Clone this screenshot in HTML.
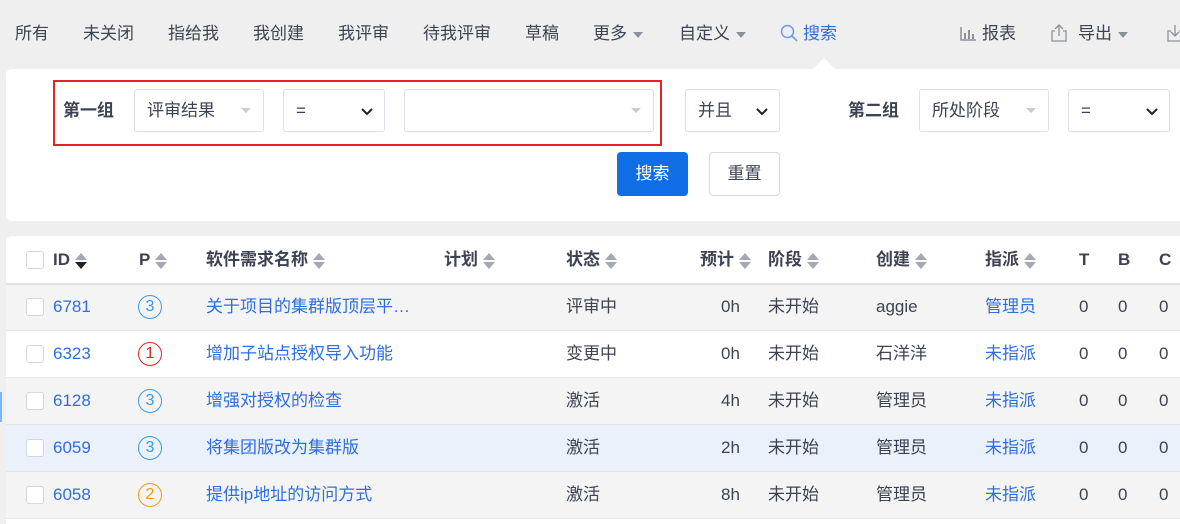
<!DOCTYPE html>
<html><head><meta charset="utf-8"><style>
*{margin:0;padding:0;box-sizing:border-box}
html,body{width:1180px;height:524px;overflow:hidden}
body{background:#efefef;font-family:"Liberation Sans","Noto Sans CJK SC",sans-serif;font-size:17px;color:#3c4353;position:relative}
.a{position:absolute;white-space:nowrap;line-height:24px;height:24px}
.nav{top:22px;color:#3c4353}
.caret{display:inline-block;width:0;height:0;border-left:5px solid transparent;border-right:5px solid transparent;border-top:6px solid #8c919c;vertical-align:middle;margin-left:6px}
.panel{left:6px;top:69px;width:1174px;height:152px;background:#fff;border-radius:6px 0 0 6px}
.box{position:absolute;background:#fff;border:1px solid #dcdfe4;border-radius:3px;height:43px;line-height:41px;padding-left:12px}
.gc{position:absolute;right:12px;top:18px;border-left:5px solid transparent;border-right:5px solid transparent;border-top:5px solid #c7cbd2}
.chev{position:absolute;right:10px;top:14px}
.lbl{font-weight:bold;color:#3c4353}
.tbl{left:6px;top:236px;width:1174px;height:288px;background:#fff;border-radius:6px 0 0 0}
.row{position:absolute;left:6px;width:1174px;height:47px;border-top:1px solid #e6e6e6}
.h{font-weight:bold;top:248px}
.s{display:inline-block;vertical-align:middle;margin-left:5px;width:12px;height:18px;position:relative}
.s:before{content:"";position:absolute;left:0;top:1px;border-left:6px solid transparent;border-right:6px solid transparent;border-bottom:7px solid #a3a8b2}
.s:after{content:"";position:absolute;left:0;top:10px;border-left:6px solid transparent;border-right:6px solid transparent;border-top:7px solid #a3a8b2}
.s.d:after{border-top-color:#222}
.cb{position:absolute;left:26px;width:18px;height:18px;border:1px solid #d3d6db;border-radius:3px;background:#fff}
.l{color:#2f6ee0}
.p{position:absolute;left:138px;width:24px;height:24px;border-radius:50%;border:1px solid;text-align:center;line-height:22px;font-size:16px}
</style></head><body>
<div class="a nav" style="left:15px">所有</div>
<div class="a nav" style="left:83px">未关闭</div>
<div class="a nav" style="left:168px">指给我</div>
<div class="a nav" style="left:253px">我创建</div>
<div class="a nav" style="left:338px">我评审</div>
<div class="a nav" style="left:423px">待我评审</div>
<div class="a nav" style="left:525px">草稿</div>
<div class="a nav" style="left:593px">更多<span class="caret"></span></div>
<div class="a nav" style="left:679px">自定义<span class="caret"></span></div>
<div class="a nav" style="left:780px;color:#2f6ee0"><svg width="18" height="18" viewBox="0 0 18 18" style="vertical-align:-3px;margin-right:5px"><circle cx="7.5" cy="7.5" r="6" fill="none" stroke="#6f9ce8" stroke-width="1.5"/><path d="M12 12l5 5" stroke="#6f9ce8" stroke-width="1.6"/></svg>搜索</div>
<div class="a nav" style="left:960px"><svg width="16" height="16" viewBox="0 0 16 16" style="vertical-align:-2px;margin-right:6px"><path d="M1 2v13h15" fill="none" stroke="#8c919c" stroke-width="1.5"/><rect x="4" y="8" width="2" height="6" fill="#8c919c"/><rect x="8" y="5" width="2" height="9" fill="#8c919c"/><rect x="12" y="9" width="2" height="5" fill="#8c919c"/></svg>报表</div>
<div class="a nav" style="left:1050px"><svg width="18" height="18" viewBox="0 0 18 18" style="vertical-align:-3px;margin-right:10px"><path d="M5 7H2v10h14V7h-3M9 12V1M5 5l4-4 4 4" fill="none" stroke="#8c919c" stroke-width="1.3"/></svg>导出<span class="caret"></span></div>
<div class="a nav" style="left:1166px;width:14px;overflow:hidden"><svg width="18" height="18" viewBox="0 0 18 18" style="vertical-align:-3px"><path d="M5 7H2v10h14V7h-3M9 1v11M5 8l4 4 4-4" fill="none" stroke="#8c919c" stroke-width="1.3"/></svg></div>

<div class="a panel"></div>
<div class="a" style="left:813px;top:58px;border-left:11px solid transparent;border-right:11px solid transparent;border-bottom:11px solid #fff;height:0"></div>
<div class="a" style="left:53px;top:80px;width:609px;height:66px;border:2px solid #e8202a"></div>
<div class="a lbl" style="left:63px;top:99px">第一组</div>
<div class="box" style="left:134px;top:89px;width:130px">评审结果<i class="gc"></i></div>
<div class="box" style="left:283px;top:89px;width:102px">=<svg class="chev" width="14" height="14" viewBox="0 0 14 14"><path d="M2 5l5 5 5-5" fill="none" stroke="#222" stroke-width="2"/></svg></div>
<div class="box" style="left:404px;top:89px;width:250px"><i class="gc"></i></div>
<div class="box" style="left:685px;top:89px;width:95px">并且<svg class="chev" width="14" height="14" viewBox="0 0 14 14"><path d="M2 5l5 5 5-5" fill="none" stroke="#222" stroke-width="2"/></svg></div>
<div class="a lbl" style="left:848px;top:99px">第二组</div>
<div class="box" style="left:919px;top:89px;width:130px">所处阶段<i class="gc"></i></div>
<div class="box" style="left:1068px;top:89px;width:102px">=<svg class="chev" width="14" height="14" viewBox="0 0 14 14"><path d="M2 5l5 5 5-5" fill="none" stroke="#222" stroke-width="2"/></svg></div>
<div class="a" style="left:617px;top:152px;width:71px;height:44px;background:#0f6ee6;border-radius:4px;color:#fff;text-align:center;line-height:44px">搜索</div>
<div class="a" style="left:709px;top:152px;width:71px;height:44px;border:1px solid #d6d9de;border-radius:4px;background:#fff;text-align:center;line-height:42px">重置</div>

<div class="a tbl"></div>
<div class="a" style="left:0;top:392px;width:2px;height:30px;background:#7fb5f0"></div>
<div class="cb" style="top:251px"></div>
<div class="a h" style="left:53px">ID<span class="s d"></span></div>
<div class="a h" style="left:139px">P<span class="s"></span></div>
<div class="a h" style="left:206px">软件需求名称<span class="s"></span></div>
<div class="a h" style="left:444px">计划<span class="s"></span></div>
<div class="a h" style="left:566px">状态<span class="s"></span></div>
<div class="a h" style="left:700px">预计<span class="s"></span></div>
<div class="a h" style="left:768px">阶段<span class="s"></span></div>
<div class="a h" style="left:876px">创建<span class="s"></span></div>
<div class="a h" style="left:985px">指派<span class="s"></span></div>
<div class="a h" style="left:1079px">T</div>
<div class="a h" style="left:1118px">B</div>
<div class="a h" style="left:1159px">C</div>

<div class="row" style="top:283px;background:#f4f4f4;border-top:2px solid #e2e2e2"></div>
<div class="row" style="top:330px;background:#fff"></div>
<div class="row" style="top:377px;background:#f4f4f4"></div>
<div class="row" style="top:424px;background:#eaf1fa"></div>
<div class="row" style="top:471px;background:#f4f4f4"></div>
<div class="row" style="top:518px;height:6px;background:#fff"></div>

<div class="cb" style="top:298px"></div><div class="a l" style="left:53px;top:295px">6781</div><div class="p" style="top:295px;color:#3a9ae8;border-color:#3a9ae8">3</div><div class="a l" style="left:206px;top:295px">关于项目的集群版顶层平…</div><div class="a" style="left:566px;top:295px">评审中</div><div class="a" style="left:721px;top:295px">0h</div><div class="a" style="left:768px;top:295px">未开始</div><div class="a" style="left:876px;top:295px">aggie</div><div class="a l" style="left:985px;top:295px">管理员</div><div class="a" style="left:1079px;top:295px">0</div><div class="a" style="left:1118px;top:295px">0</div><div class="a" style="left:1159px;top:295px">0</div>

<div class="cb" style="top:345px"></div><div class="a l" style="left:53px;top:342px">6323</div><div class="p" style="top:342px;color:#e02020;border-color:#e02020">1</div><div class="a l" style="left:206px;top:342px">增加子站点授权导入功能</div><div class="a" style="left:566px;top:342px">变更中</div><div class="a" style="left:721px;top:342px">0h</div><div class="a" style="left:768px;top:342px">未开始</div><div class="a" style="left:876px;top:342px">石洋洋</div><div class="a l" style="left:985px;top:342px">未指派</div><div class="a" style="left:1079px;top:342px">0</div><div class="a" style="left:1118px;top:342px">0</div><div class="a" style="left:1159px;top:342px">0</div>

<div class="cb" style="top:392px"></div><div class="a l" style="left:53px;top:389px">6128</div><div class="p" style="top:389px;color:#3a9ae8;border-color:#3a9ae8">3</div><div class="a l" style="left:206px;top:389px">增强对授权的检查</div><div class="a" style="left:566px;top:389px">激活</div><div class="a" style="left:721px;top:389px">4h</div><div class="a" style="left:768px;top:389px">未开始</div><div class="a" style="left:876px;top:389px">管理员</div><div class="a l" style="left:985px;top:389px">未指派</div><div class="a" style="left:1079px;top:389px">0</div><div class="a" style="left:1118px;top:389px">0</div><div class="a" style="left:1159px;top:389px">0</div>

<div class="cb" style="top:439px"></div><div class="a l" style="left:53px;top:436px">6059</div><div class="p" style="top:436px;color:#3a9ae8;border-color:#3a9ae8">3</div><div class="a l" style="left:206px;top:436px">将集团版改为集群版</div><div class="a" style="left:566px;top:436px">激活</div><div class="a" style="left:721px;top:436px">2h</div><div class="a" style="left:768px;top:436px">未开始</div><div class="a" style="left:876px;top:436px">管理员</div><div class="a l" style="left:985px;top:436px">未指派</div><div class="a" style="left:1079px;top:436px">0</div><div class="a" style="left:1118px;top:436px">0</div><div class="a" style="left:1159px;top:436px">0</div>

<div class="cb" style="top:486px"></div><div class="a l" style="left:53px;top:483px">6058</div><div class="p" style="top:483px;color:#f29a0e;border-color:#f29a0e">2</div><div class="a l" style="left:206px;top:483px">提供ip地址的访问方式</div><div class="a" style="left:566px;top:483px">激活</div><div class="a" style="left:721px;top:483px">8h</div><div class="a" style="left:768px;top:483px">未开始</div><div class="a" style="left:876px;top:483px">管理员</div><div class="a l" style="left:985px;top:483px">未指派</div><div class="a" style="left:1079px;top:483px">0</div><div class="a" style="left:1118px;top:483px">0</div><div class="a" style="left:1159px;top:483px">0</div>
</body></html>
